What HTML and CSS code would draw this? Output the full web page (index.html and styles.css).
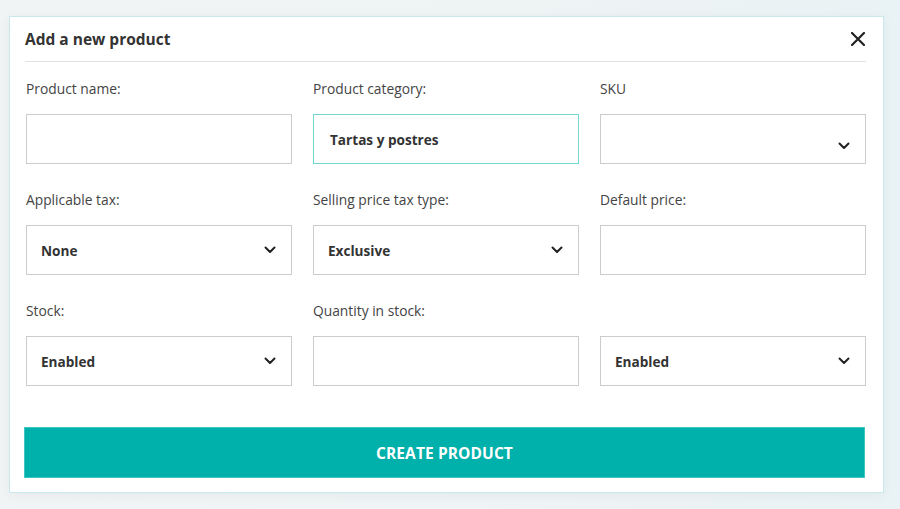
FILE: index.html
```html
<!DOCTYPE html>
<html lang="en">
<head>
<meta charset="utf-8">
<title>Add a new product</title>
<link rel="stylesheet" href="styles.css">
</head>
<body>
<div class="modal">
  <div class="modal-header">
    <h2 class="modal-title">Add a new product</h2>
    <button class="close" aria-label="Close">
      <svg width="14" height="14" viewBox="0 0 14 14"><path d="M1 1L13 13M13 1L1 13" stroke="#222" stroke-width="2.2" stroke-linecap="round" fill="none"/></svg>
    </button>
  </div>
  <div class="form-grid">
    <div class="field">
      <label class="label">Product name:</label>
      <div class="input"></div>
    </div>
    <div class="field">
      <label class="label">Product category:</label>
      <div class="input input-focus">Tartas y postres</div>
    </div>
    <div class="field">
      <label class="label">SKU</label>
      <div class="input select select-low"><span></span>
        <svg class="chev" width="12" height="8" viewBox="0 0 12 8"><path d="M1.5 1.5L6 6L10.5 1.5" stroke="#222" stroke-width="2" fill="none" stroke-linecap="round" stroke-linejoin="round"/></svg>
      </div>
    </div>

    <div class="field">
      <label class="label">Applicable tax:</label>
      <div class="input select"><span>None</span>
        <svg class="chev" width="12" height="8" viewBox="0 0 12 8"><path d="M1.5 1.5L6 6L10.5 1.5" stroke="#222" stroke-width="2" fill="none" stroke-linecap="round" stroke-linejoin="round"/></svg>
      </div>
    </div>
    <div class="field">
      <label class="label">Selling price tax type:</label>
      <div class="input select"><span>Exclusive</span>
        <svg class="chev" width="12" height="8" viewBox="0 0 12 8"><path d="M1.5 1.5L6 6L10.5 1.5" stroke="#222" stroke-width="2" fill="none" stroke-linecap="round" stroke-linejoin="round"/></svg>
      </div>
    </div>
    <div class="field">
      <label class="label">Default price:</label>
      <div class="input"></div>
    </div>

    <div class="field">
      <label class="label">Stock:</label>
      <div class="input select"><span>Enabled</span>
        <svg class="chev" width="12" height="8" viewBox="0 0 12 8"><path d="M1.5 1.5L6 6L10.5 1.5" stroke="#222" stroke-width="2" fill="none" stroke-linecap="round" stroke-linejoin="round"/></svg>
      </div>
    </div>
    <div class="field">
      <label class="label">Quantity in stock:</label>
      <div class="input"></div>
    </div>
    <div class="field">
      <label class="label">&nbsp;</label>
      <div class="input select"><span>Enabled</span>
        <svg class="chev" width="12" height="8" viewBox="0 0 12 8"><path d="M1.5 1.5L6 6L10.5 1.5" stroke="#222" stroke-width="2" fill="none" stroke-linecap="round" stroke-linejoin="round"/></svg>
      </div>
    </div>
  </div>
  <button class="submit">CREATE PRODUCT</button>
</div>
</body>
</html>
```

FILE: styles.css
```css
* { box-sizing: border-box; }

html, body {
  margin: 0;
  padding: 0;
}

body {
  width: 900px;
  height: 509px;
  overflow: hidden;
  background: linear-gradient(90deg, #f1f4f5 0%, #eef3f4 60%, #e9f2f4 100%);
  font-family: "Open Sans", "Noto Sans", sans-serif;
  color: #333;
  padding: 16px 0 0 9px;
}

.modal {
  width: 875px;
  height: 477px;
  background: #fff;
  border: 1px solid #c9e9eb;
  box-shadow: 0 2px 10px rgba(0, 60, 70, 0.05);
  padding: 0 17px 0 14px;
  display: flex;
  flex-direction: column;
}

.modal-header {
  display: flex;
  align-items: center;
  justify-content: space-between;
  height: 45px;
  padding: 0;
  border-bottom: 1px solid #e2e2e2;
  margin-left: 1px;
}

.modal-title {
  margin: 0;
  font-size: 15.5px;
  font-weight: 700;
  color: #333;
  line-height: 22px;
}

.close {
  background: none;
  border: 0;
  padding: 0;
  width: 16px;
  height: 16px;
  display: flex;
  align-items: center;
  justify-content: center;
}

.form-grid {
  display: grid;
  grid-template-columns: repeat(3, 266px);
  column-gap: 21px;
  row-gap: 26px;
  margin-top: 17px;
  padding-left: 2px;
}

.field {
  display: flex;
  flex-direction: column;
}

.label {
  font-size: 13.8px;
  line-height: 20px;
  color: #444;
  margin-bottom: 15px;
}

.input {
  height: 50px;
  border: 1px solid #cccccc;
  background: #fff;
  display: flex;
  align-items: center;
  padding: 0 14px;
  font-size: 13.6px;
  font-weight: 700;
  color: #333;
}

.input-focus {
  border: 1.5px solid #72d6d2;
  padding-left: 16px;
}

.select {
  justify-content: space-between;
  padding-right: 15px;
}

.select-low {
  align-items: flex-end;
  padding-bottom: 13px;
}

.chev {
  display: block;
}

.submit {
  margin-top: 41px;
  width: 841px;
  height: 51px;
  background: #00b0aa;
  border: 1px solid #3fc6c1;
  color: #fff;
  font-family: "Open Sans", "Noto Sans", sans-serif;
  font-size: 15.5px;
  font-weight: 700;
  letter-spacing: 0.1px;
  padding: 0;
}
```
